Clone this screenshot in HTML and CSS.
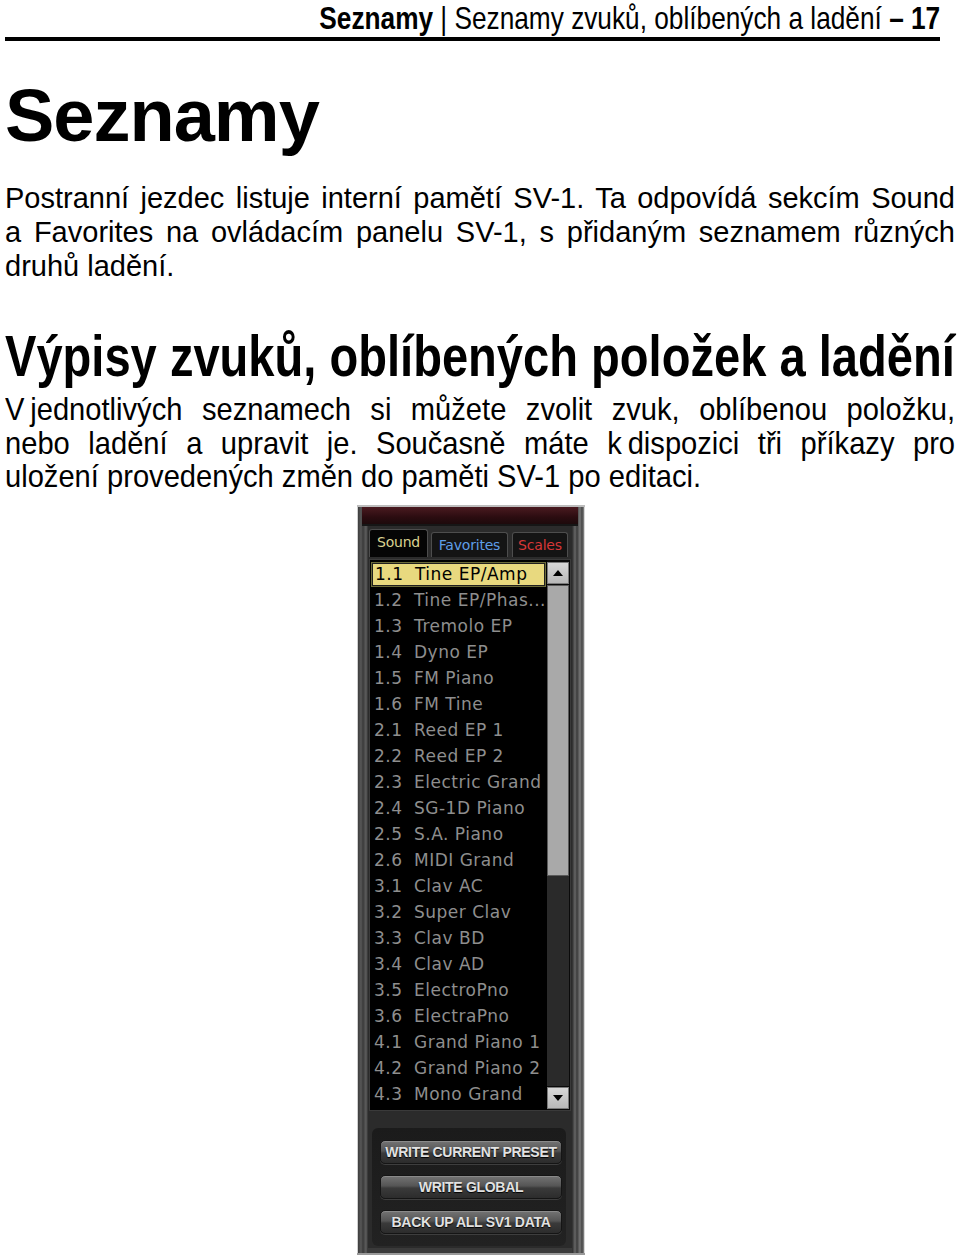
FILE: index.html
```html
<!DOCTYPE html>
<html lang="cs">
<head>
<meta charset="utf-8">
<title>Seznamy</title>
<link rel="stylesheet" href="styles.css">
</head>
<body>
<header class="running-head">
  <span class="rh-text"><b>Seznamy</b> | Seznamy zvuků, oblíbených a ladění <b>– 17</b></span>
</header>
<main class="page">
  <h1 class="title">Seznamy</h1>
  <p class="intro">
    <span class="line">Postranní jezdec listuje interní pamětí SV-1. Ta odpovídá sekcím Sound</span>
    <span class="line">a Favorites na ovládacím panelu SV-1, s přidaným seznamem různých</span>
    <span class="line last">druhů ladění.</span>
  </p>
  <h2 class="subtitle">Výpisy zvuků, oblíbených položek a ladění</h2>
  <p class="body-text">
    <span class="line">V&#8239;jednotlivých seznamech si můžete zvolit zvuk, oblíbenou položku,</span>
    <span class="line">nebo ladění a upravit je. Současně máte k&#8239;dispozici tři příkazy pro</span>
    <span class="line last">uložení provedených změn do paměti SV-1 po editaci.</span>
  </p>

  <figure class="panel">
    <div class="panel-top"></div>
    <div class="panel-body">
      <nav class="tabs">
        <span class="tab tab-sound active">Sound</span>
        <span class="tab tab-fav">Favorites</span>
        <span class="tab tab-scales">Scales</span>
      </nav>
      <div class="list">
        <ul class="items">
          <li class="selected"><span class="num">1.1</span><span class="name">Tine EP/Amp</span></li>
          <li><span class="num">1.2</span><span class="name">Tine EP/Phas...</span></li>
          <li><span class="num">1.3</span><span class="name">Tremolo EP</span></li>
          <li><span class="num">1.4</span><span class="name">Dyno EP</span></li>
          <li><span class="num">1.5</span><span class="name">FM Piano</span></li>
          <li><span class="num">1.6</span><span class="name">FM Tine</span></li>
          <li><span class="num">2.1</span><span class="name">Reed EP 1</span></li>
          <li><span class="num">2.2</span><span class="name">Reed EP 2</span></li>
          <li><span class="num">2.3</span><span class="name">Electric Grand</span></li>
          <li><span class="num">2.4</span><span class="name">SG-1D Piano</span></li>
          <li><span class="num">2.5</span><span class="name">S.A. Piano</span></li>
          <li><span class="num">2.6</span><span class="name">MIDI Grand</span></li>
          <li><span class="num">3.1</span><span class="name">Clav AC</span></li>
          <li><span class="num">3.2</span><span class="name">Super Clav</span></li>
          <li><span class="num">3.3</span><span class="name">Clav BD</span></li>
          <li><span class="num">3.4</span><span class="name">Clav AD</span></li>
          <li><span class="num">3.5</span><span class="name">ElectroPno</span></li>
          <li><span class="num">3.6</span><span class="name">ElectraPno</span></li>
          <li><span class="num">4.1</span><span class="name">Grand Piano 1</span></li>
          <li><span class="num">4.2</span><span class="name">Grand Piano 2</span></li>
          <li><span class="num">4.3</span><span class="name">Mono Grand</span></li>
        </ul>
        <div class="scrollbar">
          <span class="sb-btn"><svg width="10" height="6" viewBox="0 0 10 6"><polygon points="0,6 10,6 5,0" fill="#000"/></svg></span>
          <span class="sb-track"><span class="sb-thumb"></span></span>
          <span class="sb-btn"><svg width="10" height="6" viewBox="0 0 10 6"><polygon points="0,0 10,0 5,6" fill="#000"/></svg></span>
        </div>
      </div>
      <div class="actions">
        <button class="act">WRITE CURRENT PRESET</button>
        <button class="act">WRITE GLOBAL</button>
        <button class="act">BACK UP ALL SV1 DATA</button>
      </div>
    </div>
  </figure>
</main>
</body>
</html>
```

FILE: styles.css
```css
html, body {
  margin: 0;
  padding: 0;
  background: #fff;
  color: #000;
}
body {
  width: 960px;
  font-family: "Liberation Sans", Arial, sans-serif;
}

/* narrow face emulated from Liberation Sans */
.running-head {
  margin: 0 20px 0 5px;
  padding-top: 1px;
  height: 36px;
  border-bottom: 4px solid #000;
  display: flex;
  justify-content: flex-end;
  align-items: flex-start;
  font-size: 32px;
  line-height: 34px;
}
.rh-text {
  display: inline-block;
  white-space: nowrap;
  transform: scaleX(0.82);
  transform-origin: right top;
}

.page {
  padding: 0 5px;
}

.title {
  margin: 35px 0 0;
  font-size: 74px;
  line-height: 80px;
  font-weight: 700;
  letter-spacing: -1px;
}

.intro {
  margin: 25px 0 0;
  font-size: 29px;
  line-height: 34px;
}
.line {
  display: block;
  text-align: justify;
  text-align-last: justify;
}
.line.last {
  text-align-last: left;
}

.subtitle {
  margin: 42px 0 0;
  width: 1158px;
  white-space: nowrap;
  font-size: 57px;
  line-height: 62px;
  font-weight: 700;
  transform: scaleX(0.826);
  transform-origin: left top;
}

.body-text {
  margin: 6px 0 0;
  width: 1044px;
  font-size: 32px;
  line-height: 33.5px;
  transform: scaleX(0.91);
  transform-origin: left top;
}

/* ---------- panel ---------- */
.panel {
  margin: 11px 0 0 352px;
  width: 228px;
  height: 750px;
  box-sizing: border-box;
  padding: 0 13px 5px 11px;
  display: flex;
  flex-direction: column;
  background:
    linear-gradient(to right,
      #cfcfcf 0, #cfcfcf 1px,
      #3c3c3c 1px, #575757 4px, #3a3a3a 6px, #5e5e5e 9px, #2f2f2f 11px,
      transparent 11px, transparent 215px,
      #2a2a2a 215px, #666 218px, #3b3b3b 220px, #777 223px, #444 225px, #8a8a8a 227px, #d8d8d8 227px);
  background-color: #3a3a3a;
  border-top: 2px solid #bdbdbd;
  border-bottom: 2px solid #9a9a9a;
}
.panel-top {
  height: 17px;
  margin: 0 -6px 0 -6px;
  background: linear-gradient(to bottom, #4a1a20 0, #2b0c10 60%, #1d0a0c 100%);
  border-bottom: 2px solid #161616;
  flex: none;
}
.panel-body {
  flex: 1;
  background: #2b2b2b;
  display: flex;
  flex-direction: column;
}

.tabs {
  display: flex;
  align-items: flex-end;
  gap: 3px;
  height: 31px;
  padding-left: 1px;
  box-sizing: border-box;
  font-family: "DejaVu Sans", Verdana, sans-serif;
  font-size: 14px;
  letter-spacing: -0.2px;
}
.tab {
  height: 25px;
  display: flex;
  align-items: center;
  justify-content: center;
  background: #141414;
  border: 1px solid #4d4d4d;
  border-bottom: none;
  border-radius: 3px 3px 0 0;
  box-sizing: border-box;
}
.tab.active {
  height: 28px;
  background: #050505;
  padding-bottom: 3px;
}
.tab-sound { width: 59px; color: #d9d290; }
.tab-fav { width: 77px; color: #5e9de6; }
.tab-scales { width: 56px; color: #d63737; margin-left: 1px; }

.list {
  margin: 2px 1px 0;
  height: 552px;
  background: #000;
  border: 1px solid #3a3a3a;
  box-sizing: border-box;
  display: grid;
  grid-template-columns: 1fr 23px;
}
.items {
  list-style: none;
  margin: 0;
  padding: 1px 0 0 0;
  font-family: "DejaVu Sans", Verdana, sans-serif;
  font-size: 17px;
  letter-spacing: 0.5px;
  color: #8e8e8e;
  overflow: hidden;
}
.items li {
  height: 26px;
  display: flex;
  align-items: center;
  white-space: nowrap;
  overflow: hidden;
  box-sizing: border-box;
}
.items .num {
  width: 44px;
  padding-left: 4px;
  box-sizing: border-box;
  flex: none;
}
.items li.selected {
  background: #e8d97f;
  color: #000;
  border: 1px solid #1f1f1f;
  box-shadow: 0 0 0 1px #6b6b3a;
  margin: 2px 2px 1px 2px;
  height: 23px;
}
.items li.selected .num { padding-left: 2px; width: 42px; }

.scrollbar {
  display: flex;
  flex-direction: column;
  padding: 2px 1px 1px 0;
  gap: 1px;
  background: #0a0a0a;
}
.sb-btn {
  height: 22px;
  flex: none;
  background: linear-gradient(to bottom, #d8d8d8, #b8b8b8);
  border: 1px solid #7a7a7a;
  box-sizing: border-box;
  display: flex;
  align-items: center;
  justify-content: center;
}
.sb-track {
  flex: 1;
  background: #2a2a2a;
  display: flex;
  flex-direction: column;
}
.sb-thumb {
  height: 291px;
  background: #a9a9a9;
  border: 1px solid #5a5a5a;
  box-sizing: border-box;
}

.actions {
  margin: 17px 6px 0 4px;
  padding: 12px 4px 12px 8px;
  background: linear-gradient(to bottom, #1b1b1b, #222);
  border-radius: 6px;
  display: flex;
  flex-direction: column;
  gap: 11px;
}
.act {
  height: 24px;
  margin: 0;
  padding: 0;
  border: 1px solid #151515;
  border-radius: 5px;
  background: linear-gradient(to bottom, #747474 0, #555 45%, #3a3a3a 55%, #2c2c2c 100%);
  box-shadow: 0 1px 0 #3e3e3e, inset 0 1px 0 #8a8a8a;
  color: #e2e2e2;
  font-family: "Liberation Sans", Arial, sans-serif;
  font-weight: 700;
  font-size: 14px;
  letter-spacing: -0.3px;
  text-shadow: 0 1px 1px #000;
  text-align: center;
}
```
